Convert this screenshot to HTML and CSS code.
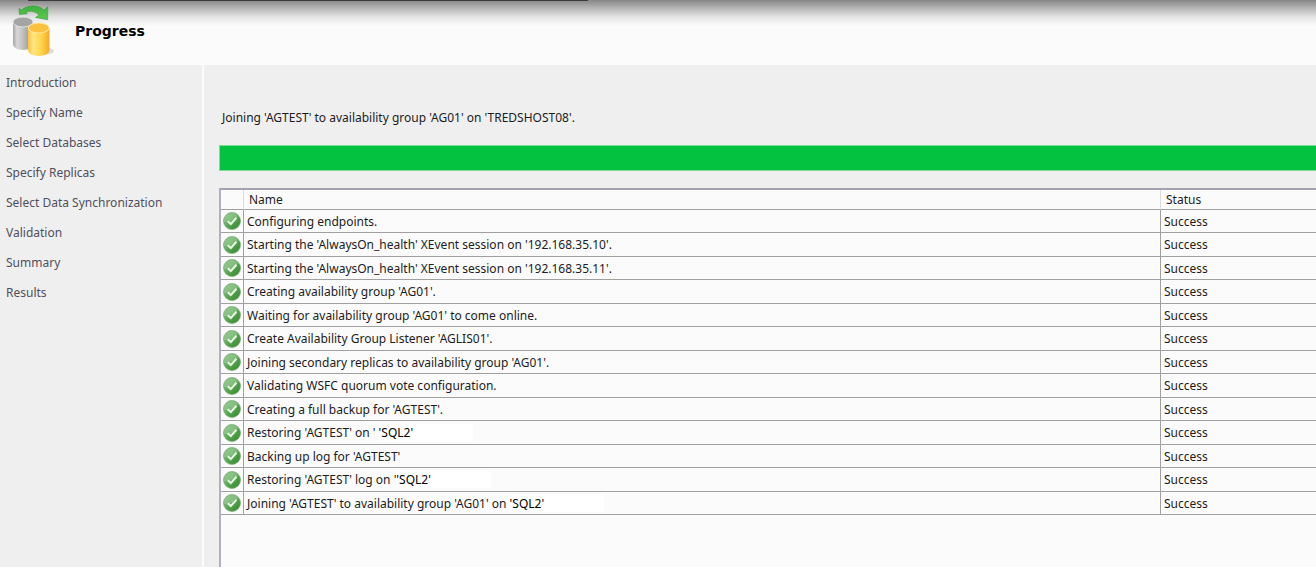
FILE: index.html
```html
<!DOCTYPE html>
<html lang="en">
<head>
    <meta charset="UTF-8">
    <title>Progress</title>
    <link rel="stylesheet" href="styles.css">
</head>
<body>
    <svg class="defs" width="0" height="0" aria-hidden="true">
        <defs>
            <linearGradient id="ball" x1="0" y1="0" x2="1" y2="1">
                <stop offset="0" stop-color="#7cbc78"/>
                <stop offset="0.4" stop-color="#68b062"/>
                <stop offset="0.6" stop-color="#4f9f48"/>
                <stop offset="1" stop-color="#35852c"/>
            </linearGradient>
            <symbol id="ok" viewBox="0 0 18 18">
                <circle cx="9" cy="9" r="8.5" fill="url(#ball)" stroke="#78a874" stroke-width="0.7"/>
                <path d="M1 10a8 8 0 0 1 14.500-5.500C12 6 9 11 1 10z" fill="#fff" opacity="0.2"/>
                <path d="M4.800 9.200l3 2.800L13.500 5.800" fill="none" stroke="#e9f6e6" stroke-width="2"/>
            </symbol>
        </defs>
    </svg>

    <header class="header">
        <svg class="logo" viewBox="0 0 44 52" aria-hidden="true">
            <defs>
                <linearGradient id="gray">
                    <stop offset="0" stop-color="#a5a5a5"/>
                    <stop offset="0.2" stop-color="#d8d8d8"/>
                    <stop offset="0.45" stop-color="#c4c4c4"/>
                    <stop offset="1" stop-color="#8b8b8b"/>
                </linearGradient>
                <linearGradient id="gold">
                    <stop offset="0" stop-color="#f8c440"/>
                    <stop offset="0.25" stop-color="#ffe682"/>
                    <stop offset="0.6" stop-color="#fed54f"/>
                    <stop offset="1" stop-color="#f4ab24"/>
                </linearGradient>
                <linearGradient id="arrow" x2="0" y2="1">
                    <stop offset="0" stop-color="#3fae40"/>
                    <stop offset="1" stop-color="#5bcb50"/>
                </linearGradient>
            </defs>
            <ellipse cx="32" cy="46" rx="11" ry="4" fill="#000" opacity="0.12"/>
            <path d="M2 17v22c0 3 4 6 10 6s10-3 10-6V17z" fill="url(#gray)"/>
            <ellipse cx="12" cy="17" rx="10" ry="5" fill="#a4a4a4" stroke="#e2e2e2"/>
            <path d="M17 23v22c0 3 4 6 10.500 6s11-3 11-6V23z" fill="url(#gold)"/>
            <ellipse cx="27.700" cy="23" rx="10.500" ry="5" fill="#fcc040" stroke="#ffe9a0"/>
            <path d="M8 3.300L10.500 5C14 2 18 1 22 1c5 0 8 1.500 11 4l3.700-3.300v13L24.500 12.500l3.500-2.500c-3-3-8-5-13-3l1.500 1.700L8.300 9.500z" fill="url(#arrow)" stroke="#399e3a" stroke-width="0.6"/>
        </svg>
        <h1>Progress</h1>
    </header>

    <div class="wizard">
        <nav class="steps">
            <a href="#introduction">Introduction</a>
            <a href="#name">Specify Name</a>
            <a href="#databases">Select Databases</a>
            <a href="#replicas">Specify Replicas</a>
            <a href="#sync">Select Data Synchronization</a>
            <a href="#validation">Validation</a>
            <a href="#summary">Summary</a>
            <a href="#results">Results</a>
        </nav>

        <main class="content">
            <p class="message">Joining 'AGTEST' to availability group 'AG01' on 'TREDSHOST08'.</p>
            <div class="progress" role="progressbar" aria-label="Progress" aria-valuenow="100"></div>

            <div class="grid">
                <table>
                    <thead>
                        <tr><th class="icon"></th><th>Name</th><th class="status">Status</th></tr>
                    </thead>
                    <tbody>
                        <tr><td><svg><use href="#ok"/></svg></td><td>Configuring endpoints.</td><td>Success</td></tr>
                        <tr><td><svg><use href="#ok"/></svg></td><td>Starting the 'AlwaysOn_health' XEvent session on '192.168.35.10'.</td><td>Success</td></tr>
                        <tr><td><svg><use href="#ok"/></svg></td><td>Starting the 'AlwaysOn_health' XEvent session on '192.168.35.11'.</td><td>Success</td></tr>
                        <tr><td><svg><use href="#ok"/></svg></td><td>Creating availability group 'AG01'.</td><td>Success</td></tr>
                        <tr><td><svg><use href="#ok"/></svg></td><td>Waiting for availability group 'AG01' to come online.</td><td>Success</td></tr>
                        <tr><td><svg><use href="#ok"/></svg></td><td>Create Availability Group Listener 'AGLIS01'.</td><td>Success</td></tr>
                        <tr><td><svg><use href="#ok"/></svg></td><td>Joining secondary replicas to availability group 'AG01'.</td><td>Success</td></tr>
                        <tr><td><svg><use href="#ok"/></svg></td><td>Validating WSFC quorum vote configuration.</td><td>Success</td></tr>
                        <tr><td><svg><use href="#ok"/></svg></td><td>Creating a full backup for 'AGTEST'.</td><td>Success</td></tr>
                        <tr><td><svg><use href="#ok"/></svg></td><td>Restoring 'AGTEST' on ' <span class="host">'SQL2'</span></td><td>Success</td></tr>
                        <tr><td><svg><use href="#ok"/></svg></td><td>Backing up log for 'AGTEST'</td><td>Success</td></tr>
                        <tr><td><svg><use href="#ok"/></svg></td><td>Restoring 'AGTEST' log on '<span class="host">'SQL2'</span></td><td>Success</td></tr>
                        <tr><td><svg><use href="#ok"/></svg></td><td>Joining 'AGTEST' to availability group 'AG01' on <span class="host">'SQL2'</span></td><td>Success</td></tr>
                    </tbody>
                </table>
            </div>
        </main>
    </div>
</body>
</html>
```
FILE: styles.css
```css
* {
    box-sizing: border-box;
}
body {
    margin: 0;
    min-height: 100vh;
    display: flex;
    flex-direction: column;
    background: #efefef;
    color: #1c1c24;
    font-family: "Noto Sans", sans-serif;
    font-size: 12px;
    line-height: 20px;
}
.defs {
    position: absolute;
}
.header {
    display: flex;
    gap: 20px;
    height: 65px;
    padding: 5px 11px;
    background:
        linear-gradient(#3c3a3c, #3c3a3c) 28px 0 / 560px 1px no-repeat,
        linear-gradient(#868686, #b4b4b4 8px, #e4e4e4 17px, #fbfbfb 26px);
}
.logo {
    width: 44px;
    height: 52px;
}
h1 {
    margin: 16px 0 0;
    color: #000;
    font-family: "DejaVu Sans", sans-serif;
    font-size: 14px;
    line-height: 20px;
}
.wizard {
    flex: 1;
    display: flex;
}
.steps {
    flex: none;
    display: flex;
    flex-direction: column;
    gap: 10px;
    width: 204px;
    padding: 8px 6px;
    border-right: 2px solid #fbfbfb;
}
.steps a {
    color: #50505c;
    text-decoration: none;
}
.content {
    flex: 1;
    display: flex;
    flex-direction: column;
    min-width: 0;
    padding: 43px 0 0 15px;
}
.message {
    margin: 0 0 17px 3px;
}
.progress {
    height: 26px;
    margin-bottom: 17px;
    background: #02c23f;
    border: 1px solid #7ddc95;
    border-right: 0;
}
.grid {
    flex: 1;
    background: #fbfbfb;
    border-top: 2px solid #a2a2b0;
    border-left: 2px solid #b0b0c4;
}
table {
    width: 100%;
    border-collapse: separate;
    border-spacing: 0;
    table-layout: fixed;
}
th, td {
    padding: 0 3px;
    border-right: 1px solid #a0a0a0;
    border-bottom: 1px solid #a0a0a0;
    line-height: 19px;
    text-align: left;
    white-space: nowrap;
}
th {
    height: 20px;
    padding: 0 5px;
    border-right-color: #dcdcdc;
    font-weight: normal;
}
th:last-child, td:last-child {
    border-right: 0;
}
td {
    height: 23px;
}
tr:nth-child(even) td {
    height: 24px;
}
td:first-child {
    padding: 0 2px;
}
td svg {
    display: block;
    width: 18px;
    height: 18px;
}
.icon {
    width: 23px;
}
.status {
    width: 155px;
}
.host {
    padding-right: 60px;
    background: #fff;
    color: #000;
}
```
